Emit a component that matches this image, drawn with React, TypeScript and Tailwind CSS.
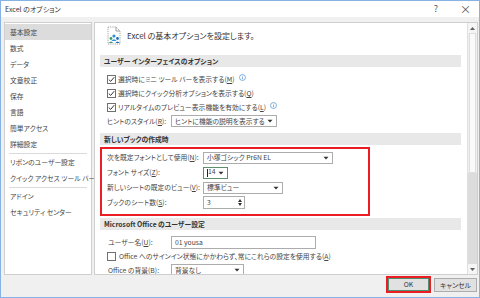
import React from "react";

const font = "font-['Noto_Sans_CJK_JP',sans-serif] [font-feature-settings:'palt']";

function Key({ k }: { k: string }) {
  return (
    <>
      (<span className="underline">{k}</span>)
    </>
  );
}

function Check({ checked = true }: { checked?: boolean }) {
  return (
    <span className="w-[9px] h-[9px] border border-[#707070] bg-white flex items-center justify-center shrink-0">
      {checked && (
        <svg width="7" height="7" viewBox="0 0 7 7">
          <path d="M0.8 3.6 L2.7 5.4 L6.2 1.2" fill="none" stroke="#333" strokeWidth="1" />
        </svg>
      )}
    </span>
  );
}

function Info() {
  return (
    <svg width="7" height="7" viewBox="0 0 8 8" className="ml-[2px] -mt-[4px] shrink-0">
      <circle cx="4" cy="4" r="3.4" fill="none" stroke="#4a8fd6" strokeWidth="0.8" />
      <rect x="3.6" y="3.4" width="0.8" height="2.6" fill="#4a8fd6" />
      <rect x="3.6" y="2" width="0.8" height="0.8" fill="#4a8fd6" />
    </svg>
  );
}

function Caret() {
  return (
    <svg width="6" height="4" viewBox="0 0 6 4" className="shrink-0">
      <path d="M0.5 0.8 L5.5 0.8 L3 3.4 Z" fill="#333" />
    </svg>
  );
}

function Select({ w, text, cls = "border-[#acacac]" }: { w: string; text: React.ReactNode; cls?: string }) {
  return (
    <div className={`${w} shrink-0 h-[12px] border ${cls} bg-white flex items-center justify-between pl-[3px] pr-[3px]`}>
      <span className="leading-none whitespace-nowrap">{text}</span>
      <Caret />
    </div>
  );
}

function Bar({ children, mt }: { children: React.ReactNode; mt: string }) {
  return (
    <div className={`${mt} h-[12px] bg-[#e8e8e8] flex items-center pl-[4px] font-bold text-[#333] text-[6.8px] whitespace-nowrap`}>
      {children}
    </div>
  );
}

function Label({ w, children }: { w: string; children: React.ReactNode }) {
  return <span className={`${w} shrink-0 whitespace-nowrap`}>{children}</span>;
}

function DocIcon() {
  return (
    <svg width="17" height="19" viewBox="0 0 17 19">
      <path d="M2 1 H10 L14 5 V18 H2 Z" fill="#fff" stroke="#8a8a8a" strokeWidth="0.8" strokeDasharray="1.2 1" />
      <path d="M10 1 V5 H14" fill="none" stroke="#8a8a8a" strokeWidth="0.8" />
      <circle cx="8" cy="10" r="1.6" fill="#2e8fd8" />
      <path d="M5.4 15 Q8 11.5 10.6 15 Z" fill="#2e8fd8" />
      <circle cx="5" cy="12.5" r="1.4" fill="#37a06a" />
      <path d="M2.8 17 Q5 14 7.2 17 Z" fill="#37a06a" />
      <circle cx="11.5" cy="12.5" r="1.4" fill="#1f6fb8" />
      <path d="M9.3 17 Q11.5 14 13.7 17 Z" fill="#1f6fb8" />
    </svg>
  );
}

const nav1 = ["基本設定", "数式", "データ", "文章校正", "保存", "言語", "簡単アクセス", "詳細設定"];
const nav2 = ["リボンのユーザー設定", "クイック アクセス ツール バー"];
const nav3 = ["アドイン", "セキュリティ センター"];

function NavItem({ label, active }: { label: string; active?: boolean }) {
  return (
    <div className={`h-[16px] flex items-center pl-[5px] whitespace-nowrap ${active ? "bg-[#dcdcdc]" : ""}`}>{label}</div>
  );
}

export default function App() {
  return (
    <div className={`w-[480px] h-[298px] border border-[#86b3e4] bg-[#f0f0f0] flex flex-col text-[6.8px] text-[#444] overflow-hidden ${font}`}>
      {/* title bar */}
      <div className="h-[16px] bg-white flex items-center pl-[4px] pr-[8px] shrink-0">
        <span className="text-[7px] text-[#333]">Excel のオプション</span>
        <span className="ml-auto text-[9px] text-[#555] mr-[22px]">?</span>
        <span className="text-[11px] text-[#555] leading-none">×</span>
      </div>

      {/* main */}
      <div className="flex pt-[5px] pl-[3px] pr-[1px] gap-[2px] h-[258px] shrink-0">
        <div className="w-[88px] h-[253px] bg-white border border-[#cfcfcf] pt-[1px]">
          {nav1.map((n, i) => (
            <NavItem key={n} label={n} active={i === 0} />
          ))}
          <div className="h-[2px] flex items-center px-[4px]"><div className="h-px w-full bg-[#dadada]" /></div>
          {nav2.map((n) => (
            <NavItem key={n} label={n} />
          ))}
          <div className="h-[2px] flex items-center px-[4px]"><div className="h-px w-full bg-[#dadada]" /></div>
          {nav3.map((n) => (
            <NavItem key={n} label={n} />
          ))}
        </div>

        <div className="flex-1 h-[253px] bg-white border border-[#cfcfcf] flex overflow-hidden">
          <div className="flex-1 pl-[5px] pr-[6px] overflow-hidden">
            <div className="mt-[3px] h-[19px] flex items-center pl-[6px] gap-[4px]">
              <DocIcon />
              <span className="text-[8px] text-[#333] whitespace-nowrap">Excel の基本オプションを設定します。</span>
            </div>
            <Bar mt="mt-[10px]">ユーザー インターフェイスのオプション</Bar>
            <div className="mt-[5px] pl-[7px] whitespace-nowrap">
              <div className="h-[14px] flex items-center gap-[2px]">
                <Check />
                <span>選択時にミニ ツール バーを表示する<Key k="M" /></span>
                <Info />
              </div>
              <div className="h-[14px] flex items-center gap-[2px]">
                <Check />
                <span>選択時にクイック分析オプションを表示する<Key k="Q" /></span>
              </div>
              <div className="h-[14px] flex items-center gap-[2px]">
                <Check />
                <span>リアルタイムのプレビュー表示機能を有効にする<Key k="L" /></span>
                <Info />
              </div>
              <div className="h-[14px] flex items-center">
                <Label w="w-[64px]">ヒントのスタイル<Key k="R" />:</Label>
                <Select w="w-[106px]" text="ヒントに機能の説明を表示する" />
              </div>
            </div>

            <Bar mt="mt-[5px]">新しいブックの作成時</Bar>
            <div className="mt-[2px] w-[270px] border-2 border-[#ec1c24] pl-[5px] pt-[1px] pb-[4px]">
              <div className="h-[15px] flex items-center">
                <Label w="w-[96px]">次を既定フォントとして使用<Key k="N" />:</Label>
                <Select w="w-[130px]" text="小塚ゴシック Pr6N EL" />
              </div>
              <div className="h-[15px] flex items-center">
                <Label w="w-[96px]">フォント サイズ<Key k="Z" />:</Label>
                <Select
                  w="w-[25px]"
                  cls="border-[#5d8f6b]"
                  text={<><span className="inline-block w-px h-[8px] bg-[#222] align-middle" />14</>}
                />
              </div>
              <div className="h-[15px] flex items-center">
                <Label w="w-[96px]">新しいシートの既定のビュー<Key k="V" />:</Label>
                <Select w="w-[80px]" text="標準ビュー" />
              </div>
              <div className="h-[15px] flex items-center">
                <Label w="w-[96px]">ブックのシート数<Key k="S" />:</Label>
                <div className="w-[42px] h-[13px] border border-[#acacac] bg-white flex items-center justify-between pl-[3px] pr-[2px]">
                  <span>3</span>
                  <span className="flex flex-col gap-[1px]">
                    <svg width="4" height="3" viewBox="0 0 4 3"><path d="M0 3 L2 0 L4 3 Z" fill="#333" /></svg>
                    <svg width="4" height="3" viewBox="0 0 4 3"><path d="M0 0 L4 0 L2 3 Z" fill="#333" /></svg>
                  </span>
                </div>
              </div>
            </div>

            <Bar mt="mt-[2px]">Microsoft Office のユーザー設定</Bar>
            <div className="mt-[5px] pl-[8px] whitespace-nowrap">
              <div className="h-[14px] flex items-center">
                <Label w="w-[63px]">ユーザー名<Key k="U" />:</Label>
                <div className="w-[145px] h-[13px] border border-[#acacac] bg-white flex items-center pl-[3px]">01 yousa</div>
              </div>
              <div className="h-[14px] flex items-center gap-[3px] -ml-[1px]">
                <Check checked={false} />
                <span>Office へのサインイン状態にかかわらず、常にこれらの設定を使用する<Key k="A" /></span>
              </div>
              <div className="h-[14px] flex items-center">
                <Label w="w-[63px]">Office の背景<Key k="B" />:</Label>
                <Select w="w-[73px]" text="背景なし" />
              </div>
            </div>
          </div>

          {/* scrollbar */}
          <div className="w-[10px] border-l border-[#e0e0e0] flex flex-col bg-[#f0f0f0]">
            <div className="h-[10px] flex items-center justify-center bg-[#f5f5f5]">
              <svg width="5" height="3" viewBox="0 0 5 3"><path d="M0 3 L2.5 0 L5 3 Z" fill="#606060" /></svg>
            </div>
            <div className="h-[140px] mx-[1px] bg-[#fafafa] border border-[#dedede]" />
            <div className="flex-1 bg-[#dcdcdc]" />
            <div className="h-[10px] flex items-center justify-center bg-[#f5f5f5]">
              <svg width="5" height="3" viewBox="0 0 5 3"><path d="M0 0 L5 0 L2.5 3 Z" fill="#606060" /></svg>
            </div>
          </div>
        </div>
      </div>

      {/* bottom buttons */}
      <div className="flex-1 flex items-start justify-end pt-[1px] pr-[2px] gap-[3px]">
        <div className="border-2 border-[#ec1c24] p-0">
          <div className="w-[41px] h-[13px] border border-[#4f8f70] bg-[#e1e1e1] flex items-center justify-center text-[#333]">OK</div>
        </div>
        <div className="mt-[2px] w-[43px] h-[14px] border border-[#adadad] bg-[#e1e1e1] flex items-center justify-center text-[#333]">キャンセル</div>
      </div>
    </div>
  );
}
